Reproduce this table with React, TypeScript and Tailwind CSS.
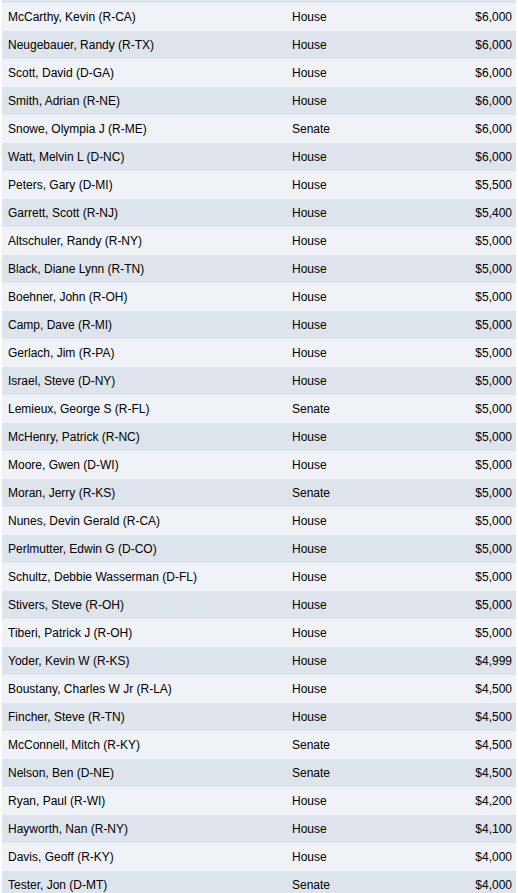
const rows: [string, string, string][] = [
  ["McCarthy, Kevin (R-CA)", "House", "$6,000"],
  ["Neugebauer, Randy (R-TX)", "House", "$6,000"],
  ["Scott, David (D-GA)", "House", "$6,000"],
  ["Smith, Adrian (R-NE)", "House", "$6,000"],
  ["Snowe, Olympia J (R-ME)", "Senate", "$6,000"],
  ["Watt, Melvin L (D-NC)", "House", "$6,000"],
  ["Peters, Gary (D-MI)", "House", "$5,500"],
  ["Garrett, Scott (R-NJ)", "House", "$5,400"],
  ["Altschuler, Randy (R-NY)", "House", "$5,000"],
  ["Black, Diane Lynn (R-TN)", "House", "$5,000"],
  ["Boehner, John (R-OH)", "House", "$5,000"],
  ["Camp, Dave (R-MI)", "House", "$5,000"],
  ["Gerlach, Jim (R-PA)", "House", "$5,000"],
  ["Israel, Steve (D-NY)", "House", "$5,000"],
  ["Lemieux, George S (R-FL)", "Senate", "$5,000"],
  ["McHenry, Patrick (R-NC)", "House", "$5,000"],
  ["Moore, Gwen (D-WI)", "House", "$5,000"],
  ["Moran, Jerry (R-KS)", "Senate", "$5,000"],
  ["Nunes, Devin Gerald (R-CA)", "House", "$5,000"],
  ["Perlmutter, Edwin G (D-CO)", "House", "$5,000"],
  ["Schultz, Debbie Wasserman (D-FL)", "House", "$5,000"],
  ["Stivers, Steve (R-OH)", "House", "$5,000"],
  ["Tiberi, Patrick J (R-OH)", "House", "$5,000"],
  ["Yoder, Kevin W (R-KS)", "House", "$4,999"],
  ["Boustany, Charles W Jr (R-LA)", "House", "$4,500"],
  ["Fincher, Steve (R-TN)", "House", "$4,500"],
  ["McConnell, Mitch (R-KY)", "Senate", "$4,500"],
  ["Nelson, Ben (D-NE)", "Senate", "$4,500"],
  ["Ryan, Paul (R-WI)", "House", "$4,200"],
  ["Hayworth, Nan (R-NY)", "House", "$4,100"],
  ["Davis, Geoff (R-KY)", "House", "$4,000"],
  ["Tester, Jon (D-MT)", "Senate", "$4,000"],
]

export default function App() {
  return (
    <div className="bg-white h-[893px] overflow-hidden px-[2px] [font-family:'Liberation_Sans',Arial,sans-serif] text-[12px] text-black">
      <div className="-mt-[25px]">
        <div className="h-[28px] bg-[#dee4eb]" />
        {rows.map(([name, chamber, amount], i) => (
          <div
            key={name}
            className={`flex items-center h-[28px] ${i % 2 === 0 ? "bg-[#eff2f6]" : "bg-[#dee4eb]"}`}
          >
            <div className="w-[290px] pl-[6px]">{name}</div>
            <div className="flex-1">{chamber}</div>
            <div className="pr-[4px] text-right">{amount}</div>
          </div>
        ))}
      </div>
    </div>
  )
}
